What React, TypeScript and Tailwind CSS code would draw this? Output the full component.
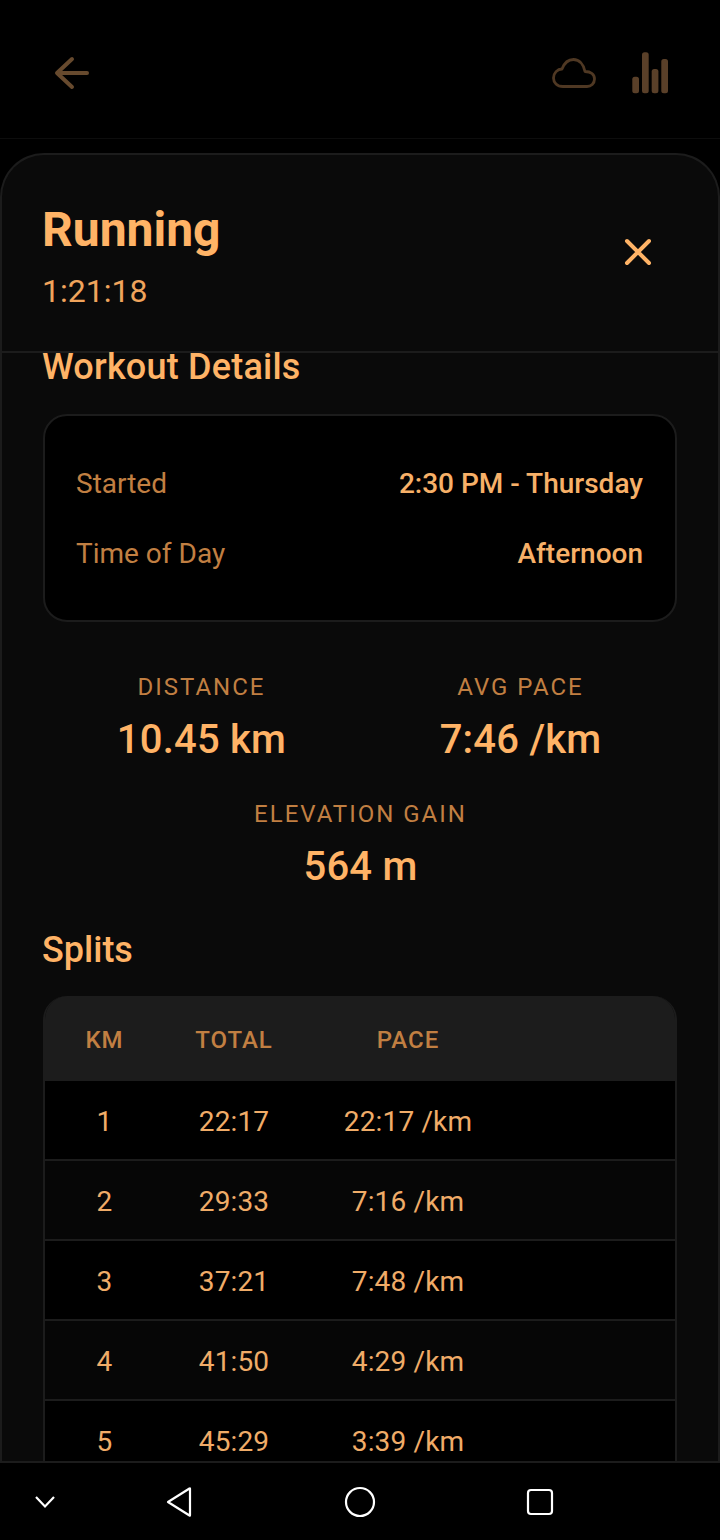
import React from "react";

const splits = [
  { km: 1, total: "22:17", pace: "22:17 /km" },
  { km: 2, total: "29:33", pace: "7:16 /km" },
  { km: 3, total: "37:21", pace: "7:48 /km" },
  { km: 4, total: "41:50", pace: "4:29 /km" },
  { km: 5, total: "45:29", pace: "3:39 /km" },
];

function Stat({ label, value }: { label: string; value: string }) {
  return (
    <div className="flex flex-col items-center">
      <span className="text-[24px] leading-[28px] tracking-[2px] text-[#c17f42]">{label}</span>
      <span className="mt-[16px] text-[40px] leading-[46px] font-medium tracking-[0.2px] text-[#ffb366]">{value}</span>
    </div>
  );
}

export default function App() {
  return (
    <div className="flex h-[1540px] w-[720px] flex-col overflow-hidden bg-black font-['Roboto',sans-serif]">
      <header className="flex h-[139px] shrink-0 items-start justify-between border-b border-[#0d0d0d] pt-[50px] pr-[52px] pl-[52px]">
        <svg width="40" height="40" viewBox="0 0 40 40" fill="none" stroke="#674a2e" strokeWidth="4" strokeLinecap="round" strokeLinejoin="round" className="mt-[3px]">
          <path d="M35 20H6" />
          <path d="M20 6L5 20L20 34" />
        </svg>
        <div className="flex items-start gap-[36px]">
          <svg width="44" height="30" viewBox="0 0 44 30" fill="none" stroke="#4f3823" strokeWidth="2.8" strokeLinejoin="round" className="mt-[8px]">
            <path d="M11 28.500C5 28.500 1.500 24.500 1.500 20C1.500 15 5.500 11 10 11C12.500 4.500 17 1.500 21.500 1.500C27 1.500 31.500 6 33 13.500C39 13.500 42.500 16.500 42.500 21C42.500 25.500 39 28.500 35 28.500Z" />
          </svg>
          <svg width="36" height="42" viewBox="0 0 36 42" fill="#5a4029" className="mt-[2px]">
            <rect x="0.3" y="24.700" width="6.700" height="16.600" rx="2.500" />
            <rect x="10" y="0.3" width="6.700" height="41" rx="2.500" />
            <rect x="19.700" y="17" width="6.700" height="24.300" rx="2.500" />
            <rect x="29.300" y="7" width="6.700" height="34.300" rx="2.500" />
          </svg>
        </div>
      </header>

      <main className="mt-[14px] flex min-h-0 flex-1 flex-col overflow-hidden rounded-t-[44px] border-x-2 border-t-2 border-[#1c1c1c] bg-[#0a0a0a]">
        <div className="flex h-[198px] shrink-0 items-start justify-between border-b-2 border-[#1c1c1c] pt-[46px] pr-[61px] pl-[40px]">
          <div className="flex flex-col">
            <h1 className="text-[48px] leading-[58px] font-bold text-[#ffb366]">Running</h1>
            <span className="mt-[13px] text-[32px] leading-[38px] text-[#f0a45c]">1:21:18</span>
          </div>
          <svg width="38" height="38" viewBox="0 0 38 38" fill="none" stroke="#ffb366" strokeWidth="4" strokeLinecap="round" className="mt-[32px]">
            <path d="M8 8L30 30M30 8L8 30" />
          </svg>
        </div>

        <div className="flex min-h-0 flex-1 flex-col px-[41px]">
          <h2 className="-mt-[1px] -ml-[1px] text-[36px] leading-[30px] font-medium tracking-[0.2px] text-[#ffb366]">Workout Details</h2>

          <section className="mt-[32px] flex h-[208px] shrink-0 flex-col gap-[34px] rounded-[24px] border-2 border-[#1c1c1c] bg-black pt-[50px] pr-[32px] pl-[31px]">
            <div className="flex items-center justify-between text-[28px] leading-[36px]">
              <span className="text-[#c17f42]">Started</span>
              <span className="font-medium text-[#f7b068]">2:30 PM - Thursday</span>
            </div>
            <div className="flex items-center justify-between text-[28px] leading-[36px]">
              <span className="text-[#c17f42]">Time of Day</span>
              <span className="font-medium text-[#f7b068]">Afternoon</span>
            </div>
          </section>

          <section className="mt-[51px] flex flex-col items-center">
            <div className="grid w-full grid-cols-2 gap-[6px] pl-[2px]">
              <Stat label="DISTANCE" value="10.45 km" />
              <Stat label="AVG PACE" value="7:46 /km" />
            </div>
            <div className="mt-[37px] pl-[1px]">
              <Stat label="ELEVATION GAIN" value="564 m" />
            </div>
          </section>

          <h2 className="mt-[40px] -ml-[1px] text-[36px] leading-[40px] font-medium text-[#ffb366]">Splits</h2>

          <section className="mt-[26px] shrink-0 overflow-hidden rounded-t-[24px] border-x-2 border-[#1c1c1c]">
            <div className="flex h-[85px] items-center bg-[#1c1c1c] pt-[3px] text-[24px] font-medium tracking-[1px] text-[#c17f42]">
              <span className="w-[119px] text-center">KM</span>
              <span className="w-[140px] text-center">TOTAL</span>
              <span className="w-[208px] text-center">PACE</span>
            </div>
            {splits.map((row, i) => (
              <div
                key={row.km}
                className={`flex h-[80px] items-center border-b-2 border-[#1c1c1c] pt-[3px] text-[28px] tracking-[0.15px] text-[#f0ac68] ${i % 2 === 0 ? "bg-black" : "bg-[#060606]"}`}
              >
                <span className="w-[119px] text-center">{row.km}</span>
                <span className="w-[140px] text-center">{row.total}</span>
                <span className="w-[208px] text-center">{row.pace}</span>
              </div>
            ))}
          </section>
        </div>
      </main>

      <nav className="flex h-[79px] shrink-0 items-center border-t-2 border-[#1c1c1c] bg-black">
        <svg width="24" height="24" viewBox="0 0 24 24" fill="none" stroke="#fff" strokeWidth="2.200" className="ml-[33px]">
          <path d="M3 7L12 16.500L21 7" />
        </svg>
        <svg width="30" height="34" viewBox="0 0 30 34" fill="none" stroke="#fff" strokeWidth="2.200" strokeLinejoin="round" className="ml-[107px]">
          <path d="M25.500 3.500Q26 3 26 4V30Q26 31 25.500 30.500L4 17Z" />
        </svg>
        <svg width="34" height="34" viewBox="0 0 34 34" fill="none" stroke="#fff" strokeWidth="2.200" className="ml-[149px]">
          <circle cx="17" cy="17" r="14" />
        </svg>
        <svg width="30" height="30" viewBox="0 0 30 30" fill="none" stroke="#fff" strokeWidth="2.200" className="ml-[148px]">
          <rect x="3" y="3" width="24" height="24" rx="3" />
        </svg>
      </nav>
    </div>
  );
}
